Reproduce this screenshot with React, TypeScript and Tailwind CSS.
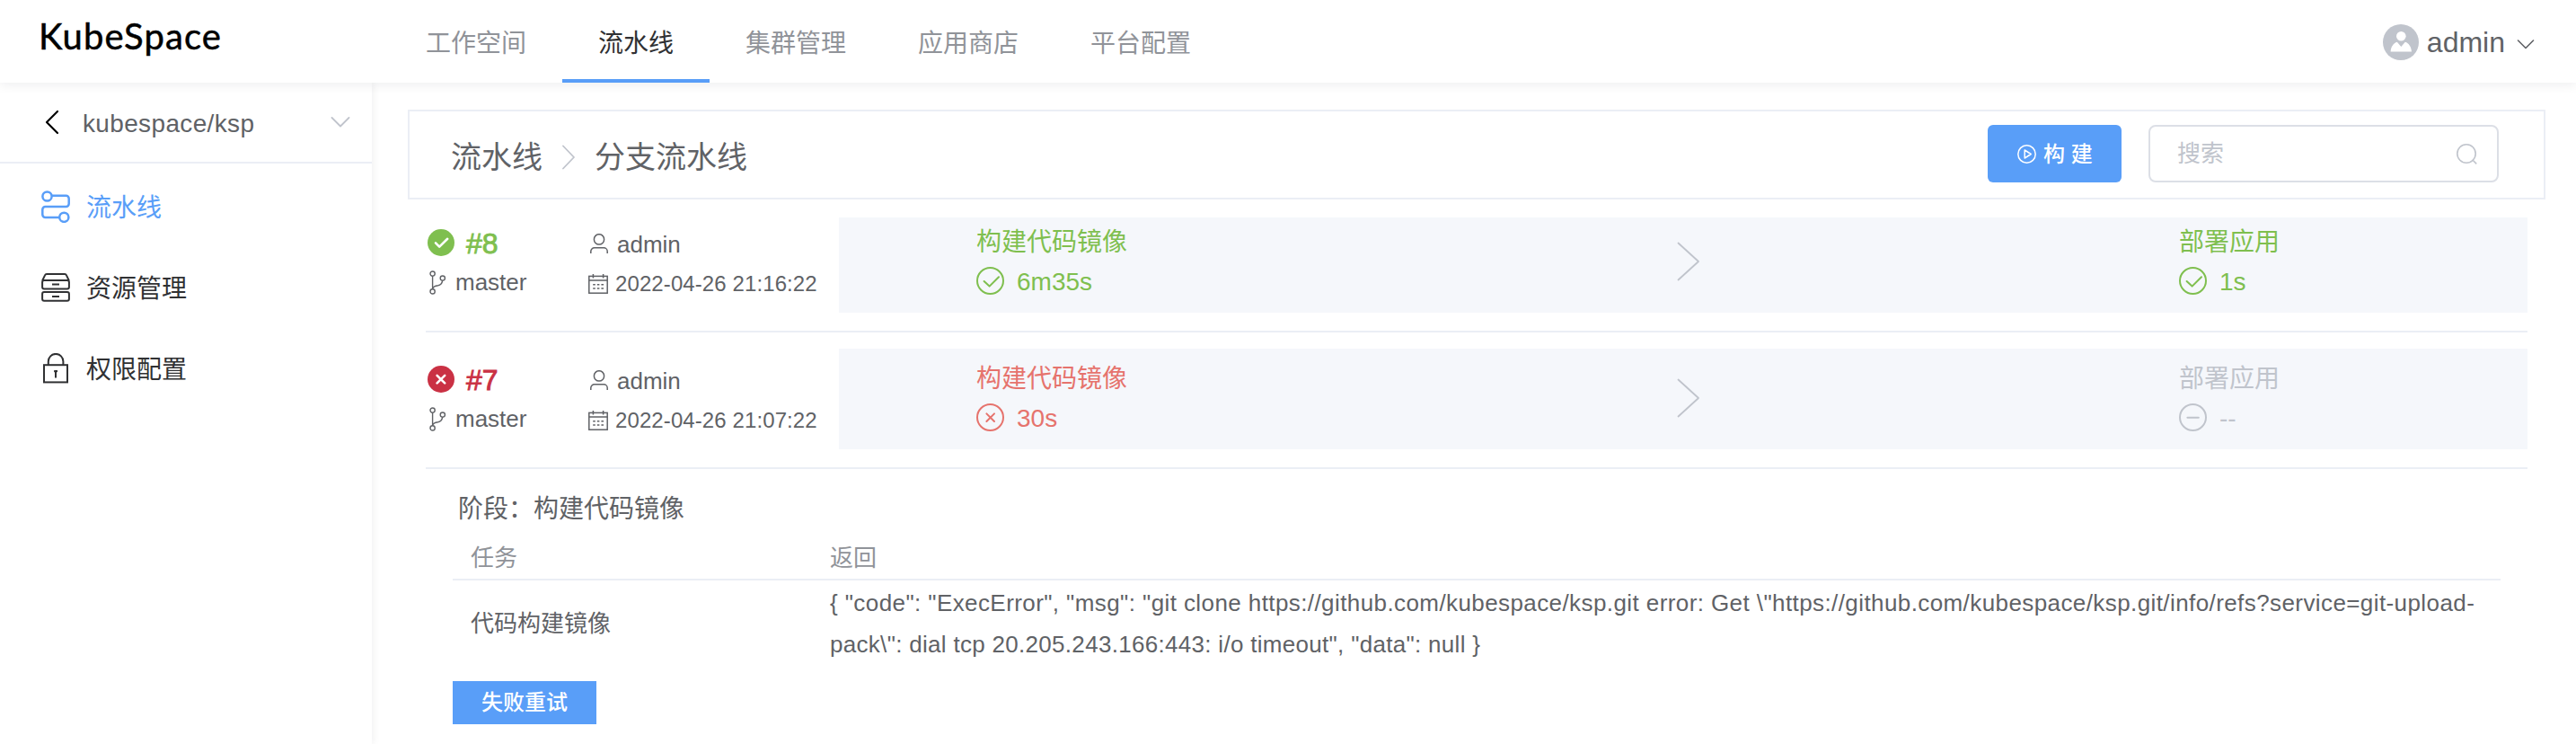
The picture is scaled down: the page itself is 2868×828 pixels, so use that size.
import type { ReactNode } from "react";

type Status = "ok" | "error" | "wait";

const NAV = ["工作空间", "流水线", "集群管理", "应用商店", "平台配置"];

const statusColor: Record<Status, string> = {
  ok: "text-[#7fbf4f]",
  error: "text-[#e6736d]",
  wait: "text-[#c0c4cc]",
};

function Chevron({ className, points, box, width = 2 }: { className: string; points: string; box: string; width?: number }) {
  return (
    <svg className={className} viewBox={box} fill="none" stroke="currentColor" strokeWidth={width} strokeLinecap="round" strokeLinejoin="round">
      <polyline points={points} />
    </svg>
  );
}

function PipelineIcon() {
  return (
    <svg className="h-9 w-8" viewBox="0 0 32 36" fill="none" stroke="currentColor" strokeWidth="2.5">
      <circle cx="6.5" cy="6.5" r="5.1" />
      <circle cx="25.3" cy="29.8" r="5.1" />
      <path d="M11.6 5.8H27.5a3.2 3.2 0 0 1 3.2 3.2v5.8a3.2 3.2 0 0 1-3.2 3.2H4.5a3.2 3.2 0 0 0-3.2 3.2v5.6A3.2 3.2 0 0 0 4.5 30H20.2" />
    </svg>
  );
}

function DrawerIcon() {
  return (
    <svg className="h-8 w-8" viewBox="0 0 32 32" fill="none" stroke="currentColor" strokeWidth="2" strokeLinejoin="round">
      <path d="M1.2 8.2 4 2.4A2.2 2.2 0 0 1 6 1.1H26a2.2 2.2 0 0 1 2 1.3L30.8 8.2" />
      <rect x="1.1" y="8" width="29.8" height="9.4" rx="2" />
      <rect x="1.1" y="21" width="29.8" height="9.8" rx="2" />
      <path d="M12 12.6h8M12 26h8" />
    </svg>
  );
}

function LockIcon() {
  return (
    <svg className="h-[34px] w-8" viewBox="0 0 32 34" fill="none" stroke="currentColor" strokeWidth="2">
      <path d="M7.8 13V9.2a8.3 8.3 0 0 1 16.6 0V13" />
      <rect x="3" y="13.2" width="26" height="19.2" />
      <path d="M16 20v7.6" />
      <circle cx="16" cy="20.6" r="1.5" fill="currentColor" stroke="none" />
      <path d="M14.2 20h3.8" />
    </svg>
  );
}

function BranchIcon() {
  return (
    <svg className="h-[27px] w-5" viewBox="0 0 20 27" fill="none" stroke="currentColor" strokeWidth="1.4">
      <circle cx="3.6" cy="3.6" r="2.6" />
      <circle cx="3.6" cy="23.4" r="2.6" />
      <circle cx="14.8" cy="8.6" r="2.6" />
      <path d="M3.6 6.2V20.8M14.6 11.2c-.4 3.6-2 5.2-5 5.6-3 .3-5.4 1-6 4" />
    </svg>
  );
}

function UserIcon() {
  return (
    <svg className="h-[22px] w-5" viewBox="0 0 20 22" fill="none" stroke="currentColor" strokeWidth="1.5">
      <ellipse cx="10" cy="6.4" rx="5.6" ry="5.7" />
      <path d="M.8 22v-2.2a4 4 0 0 1 4-4h10.400a4 4 0 0 1 4 4V22" />
    </svg>
  );
}

function CalendarIcon() {
  return (
    <svg className="h-[22px] w-[22px]" viewBox="0 0 22 22" fill="none" stroke="currentColor" strokeWidth="1.5">
      <rect x=".8" y="2.4" width="20.4" height="18.8" />
      <path d="M.8 7h20.400M5.400 0v4.600M16.600 0v4.600" />
      <path d="M5.200 11.800h11.800M5.200 16h11.800" strokeDasharray="2.6 2" />
    </svg>
  );
}

function RunBadge({ status }: { status: Status }) {
  return (
    <svg className="h-[30px] w-[30px]" viewBox="0 0 30 30">
      <circle cx="15" cy="15" r="15" fill="currentColor" />
      <path
        d={status === "ok" ? "M9 15.4l4.2 4.2 9-8.8" : "M10.600 10.800l8.600 8.600M19.200 10.800l-8.600 8.600"}
        fill="none"
        stroke="#fff"
        strokeWidth="2.6"
        strokeLinecap="round"
        strokeLinejoin="round"
      />
    </svg>
  );
}

function StageIcon({ status }: { status: Status }) {
  const d = {
    ok: "M8.6 16l6 5.6 10.4-10.4",
    error: "M11.4 11.4l8.6 8.6M20 11.4l-8.6 8.6",
    wait: "M9.4 15.7h12.4",
  }[status];
  return (
    <svg className="h-[31px] w-[31px]" viewBox="0 0 31 31" fill="none" stroke="currentColor" strokeWidth="2">
      <circle cx="15.5" cy="15.5" r="14.5" />
      <path d={d} strokeLinecap="round" strokeLinejoin="round" />
    </svg>
  );
}

function SideItem({ icon, label, active }: { icon: ReactNode; label: string; active?: boolean }) {
  return (
    <a className={`flex h-[90px] items-center gap-[18px] pl-[46px] ${active ? "text-[#599ef8]" : "text-[#303133]"}`}>
      {icon}
      <span className="pt-[3px] text-[28px] leading-[40px]">{label}</span>
    </a>
  );
}

function Stage({ name, time, status }: { name: string; time: string; status: Status }) {
  return (
    <div className={statusColor[status]}>
      <div className="pt-[2px] text-[28px] leading-[40px]">{name}</div>
      <div className="mt-1 flex h-[36px] items-center gap-[14px]">
        <StageIcon status={status} />
        <span className="pt-[4px] text-[28px] leading-[32px]">{time}</span>
      </div>
    </div>
  );
}

function Run({ id, time, status, first, stages }: { id: string; time: string; status: Status; first?: boolean; stages: { name: string; time: string; status: Status }[] }) {
  return (
    <div className={`flex border-b-2 border-[#ebeef5] pb-5 ${first ? "h-[128px]" : "mt-[18px] h-[134px]"}`}>
      <div className={`flex w-[460px] ${first ? "" : "pt-[6px]"}`}>
        <div className="w-[181px] pt-[10px]">
          <div className={`flex items-center gap-[13px] pl-[2px] ${status === "ok" ? "text-[#7fbf4f]" : "text-[#ca3144]"}`}>
            <RunBadge status={status} />
            <span className="pt-[2px] text-[32px] leading-[34px] [-webkit-text-stroke:0.9px_currentColor]">{id}</span>
          </div>
          <div className="mt-[11px] flex items-center gap-[9px] pl-1">
            <BranchIcon />
            <span className="text-[26px] leading-[30px]">master</span>
          </div>
        </div>
        <div className="pt-[13px]">
          <div className="flex items-center gap-[10px] pl-[2px]">
            <UserIcon />
            <span className="pt-[2px] text-[26px] leading-[30px]">admin</span>
          </div>
          <div className="mt-[15px] flex items-center gap-2">
            <CalendarIcon />
            <span className="text-[24px] leading-[28px] tracking-[0.1px] whitespace-nowrap">{time}</span>
          </div>
        </div>
      </div>
      <div className={`flex flex-1 items-start bg-[#f5f7fb] pl-[153px] ${first ? "pt-[6px]" : "pt-3"}`}>
        <div className="w-[780px]">
          <Stage {...stages[0]} />
        </div>
        <Chevron className="mt-[21px] h-[44px] w-[26px] text-[#c0c4cc]" box="0 0 26 44" points="1.5,1.5 24,22 1.5,42.5" width={1.8} />
        <div className="ml-[533px]">
          <Stage {...stages[1]} />
        </div>
      </div>
    </div>
  );
}

export default function App() {
  return (
    <div className="flex h-[828px] w-[2868px] flex-col overflow-hidden bg-white text-[#606266] [font-family:'Liberation_Sans','Noto_Sans_CJK_SC',sans-serif]">
      <header className="z-10 flex h-[92px] shrink-0 items-start bg-white shadow-[0_2px_12px_rgba(0,21,41,0.08)]">
        <div className="w-[434px] pt-[14px] pl-[43px] text-[40px] leading-[52px] tracking-[1.1px] text-black [-webkit-text-stroke:0.5px_currentColor] [font-family:Lato,sans-serif]">KubeSpace</div>
        <nav className="flex h-full">
          {NAV.map((label, i) => (
            <a
              key={label}
              className={`flex h-full items-center border-b-4 px-10 pt-[9px] text-[28px] ${i === 1 ? "border-[#599ef8] text-[#303133]" : "border-transparent text-[#909399]"}`}
            >
              {label}
            </a>
          ))}
        </nav>
        <div className="ml-auto flex h-full items-center pt-[2px] pr-[46px]">
          <svg className="h-10 w-10" viewBox="0 0 40 40">
            <circle cx="20" cy="20" r="20" fill="#c0c4cc" />
            <circle cx="20.3" cy="13.2" r="5.3" fill="#fff" />
            <path d="M8.6 30.4c.4-5 3-9.4 7.2-10.6l4.5 5.2 4.5-5.2c4.2 1.2 6.8 5.6 7.2 10.6z" fill="#fff" />
          </svg>
          <span className="ml-[9px] text-[32px] leading-[36px]">admin</span>
          <Chevron className="mt-1 ml-[13px] h-[11px] w-5" box="0 0 20 11" points="1.5,1 10,9.5 18.5,1" width={1.6} />
        </div>
      </header>

      <div className="flex min-h-0 flex-1">
        <aside className="w-[414px] shrink-0 shadow-[2px_0_8px_rgba(0,21,41,0.06)]">
          <div className="flex h-[90px] items-center border-b-2 border-[#ebeef5] pl-[50px]">
            <Chevron className="h-7 w-4 text-black" box="0 0 16 28" points="14,2 2,14 14,26" width={2.2} />
            <span className="ml-[26px] pt-[3px] text-[28px] leading-[32px] tracking-[0.35px]">kubespace/ksp</span>
            <Chevron className="mr-6 ml-auto h-3 w-[22px] text-[#c0c4cc]" box="0 0 22 12" points="1.5,1 11,10.5 20.5,1" width={1.8} />
          </div>
          <div className="pt-[3px]">
            <SideItem icon={<PipelineIcon />} label="流水线" active />
            <SideItem icon={<DrawerIcon />} label="资源管理" />
            <SideItem icon={<LockIcon />} label="权限配置" />
          </div>
        </aside>

        <main className="min-w-0 flex-1 pt-[30px] pr-[34px] pl-10">
          <div className="flex h-[100px] items-center border-2 border-[#ebeef5] pr-[50px] pb-[2px] pl-[46px]">
            <div className="flex items-center pt-[8px] text-[34px] leading-[44px]">
              <span>流水线</span>
              <Chevron className="mx-[22px] h-7 w-[14px] text-[#c0c4cc]" box="0 0 14 28" points="1,1.5 13,14 1,26.5" width={1.8} />
              <span>分支流水线</span>
            </div>
            <button className="ml-auto flex h-16 w-[149px] items-center rounded-[6px] bg-[#599ef8] pl-[33px] text-[24px] font-medium whitespace-pre text-white">
              <svg className="mr-[8px] h-[21px] w-[21px]" viewBox="0 0 21 21" fill="none" stroke="currentColor" strokeWidth="1.5">
                <circle cx="10.5" cy="10.5" r="9.7" />
                <path d="M8.2 6v9l7-4.500z" strokeLinejoin="round" />
              </svg>
              <span className="pt-px">构 建</span>
            </button>
            <div className="ml-[30px] flex h-16 w-[390px] items-center justify-between rounded-lg border-2 border-[#dcdfe6] pr-[22px] pl-[30px] text-[26px] text-[#c0c4cc]">
              <span>搜索</span>
              <svg className="h-[23px] w-[23px]" viewBox="0 0 23 23" fill="none" stroke="currentColor" strokeWidth="1.6">
                <circle cx="11" cy="11" r="10.2" />
                <path d="M17.6 17.8l4.6 4.6" />
              </svg>
            </div>
          </div>

          <div className="mt-5 px-5">
            <Run
              id="#8"
              time="2022-04-26 21:16:22"
              status="ok"
              first
              stages={[
                { name: "构建代码镜像", time: "6m35s", status: "ok" },
                { name: "部署应用", time: "1s", status: "ok" },
              ]}
            />
            <Run
              id="#7"
              time="2022-04-26 21:07:22"
              status="error"
              stages={[
                { name: "构建代码镜像", time: "30s", status: "error" },
                { name: "部署应用", time: "--", status: "wait" },
              ]}
            />
            <section className="px-[30px] pt-[25px]">
              <h3 className="pl-[6px] text-[28px] leading-[40px]">阶段：构建代码镜像</h3>
              <div className="mt-[14px] flex h-[45px] border-b-2 border-[#ebeef5] pl-5 text-[26px] leading-[40px] text-[#909399]">
                <span className="w-[400px]">任务</span>
                <span>返回</span>
              </div>
              <div className="flex h-[96px] items-center pl-5 text-[26px]">
                <span className="w-[400px] shrink-0">代码构建镜像</span>
                <div className="text-[26px] leading-[46px] whitespace-nowrap">
                  <p className="tracking-[0.41px]">{'{ "code": "ExecError", "msg": "git clone https://github.com/kubespace/ksp.git error: Get \\"https://github.com/kubespace/ksp.git/info/refs?service=git-upload-'}</p>
                  <p className="tracking-[0.3px]">{'pack\\": dial tcp 20.205.243.166:443: i/o timeout", "data": null }'}</p>
                </div>
              </div>
              <button className="mt-4 flex h-12 w-[160px] items-center justify-center bg-[#599ef8] text-[24px] font-medium text-white">失败重试</button>
            </section>
          </div>
        </main>
      </div>
    </div>
  );
}
